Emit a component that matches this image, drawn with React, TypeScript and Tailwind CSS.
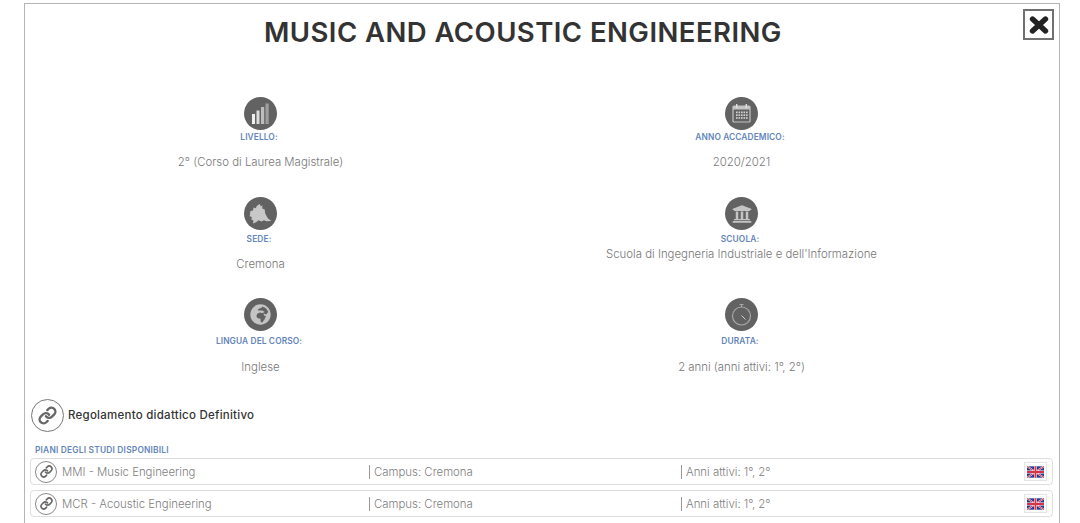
import React from "react";
import { Link as LinkIcon } from "lucide-react";
import { FaGlobeAfrica, FaUniversity } from "react-icons/fa";

const Circle = ({ children }: { children: React.ReactNode }) => (
  <div className="flex h-[33px] w-[33px] items-center justify-center rounded-full bg-[#626262] text-[#c4c4c4]">{children}</div>
);

const Bars = () => (
  <svg width="33" height="33" viewBox="0 0 33 33">
    <rect x="8" y="17" width="3" height="10" fill="#f0f0f0" />
    <rect x="12.5" y="13.5" width="3" height="13.5" fill="#dcdcdc" />
    <rect x="17" y="10" width="3.2" height="17" fill="#bdbdbd" />
    <rect x="21.5" y="6.5" width="3.2" height="20.5" fill="#9e9e9e" />
  </svg>
);

const Calendar = () => (
  <svg width="33" height="33" viewBox="0 0 33 33">
    <rect x="8" y="9" width="17" height="16" rx="1" fill="none" stroke="#c4c4c4" strokeWidth="1.2" />
    <rect x="8" y="9" width="17" height="3.5" fill="#c4c4c4" />
    <rect x="11" y="7" width="1.4" height="4" fill="#e0e0e0" />
    <rect x="20.6" y="7" width="1.4" height="4" fill="#e0e0e0" />
    {[14.5, 17.3, 20.1].map((y) =>
      [11, 13.5, 16, 18.5, 21].map((x) => <rect key={`${x}-${y}`} x={x} y={y} width="1.6" height="1.7" fill="#d2d2d2" />)
    )}
  </svg>
);

const Region = () => (
  <svg width="33" height="33" viewBox="0 0 33 33">
    <path
      d="M6.4 14 L9 13.4 L9.6 10.4 L11.6 11.2 L13 8.8 L15.7 7 L17 9.4 L18.4 8.2 L18.3 11.6 L20.7 12.6 L21.2 16.6 L22.8 19.4 L24 21.6 L27.4 24 L22.4 24.3 L20 23.2 L17.4 24.4 L14.6 23.2 L12.4 25 L9 26.6 L9.4 23.6 L7.4 22.6 L7.8 20 L5.7 19.3 Z"
      fill="#c8c8c8"
    />
  </svg>
);

const Stopwatch = () => (
  <svg width="33" height="33" viewBox="0 0 33 33" fill="none" stroke="#a8a8a8">
    <circle cx="16.5" cy="18" r="9" strokeWidth="1.2" />
    <path d="M14.5 6.5 H18.5 M16.5 6.5 V9" strokeWidth="1.2" />
    <path d="M16.5 17.5 L20.5 21.5" strokeWidth="1" stroke="#d0d0d0" />
  </svg>
);

const CloseX = () => (
  <svg width="20" height="18" viewBox="0 0 20 18">
    <path d="M3.5 3 L16.5 15 M16.5 3 L3.5 15" stroke="#222" strokeWidth="5.4" strokeLinecap="round" />
  </svg>
);

const Flag = () => (
  <svg width="17" height="12" viewBox="0 0 60 40">
    <rect width="60" height="40" fill="#2b3a8c" />
    <path d="M0 0 L60 40 M60 0 L0 40" stroke="#fff" strokeWidth="6" />
    <path d="M0 0 L60 40 M60 0 L0 40" stroke="#d8324a" strokeWidth="3.5" />
    <path d="M30 0 V40 M0 20 H60" stroke="#fff" strokeWidth="10" />
    <path d="M30 0 V40 M0 20 H60" stroke="#d8324a" strokeWidth="6.5" />
  </svg>
);

const LinkCircle = ({ size }: { size: "lg" | "sm" }) =>
  size === "lg" ? (
    <div className="flex h-[33px] w-[33px] shrink-0 items-center justify-center rounded-full border border-[#777] text-[#666]">
      <LinkIcon size={19} strokeWidth={3} />
    </div>
  ) : (
    <div className="flex h-[22px] w-[22px] shrink-0 items-center justify-center rounded-full border border-[#888] text-[#666]">
      <LinkIcon size={13} strokeWidth={3} />
    </div>
  );

const Info = ({
  icon,
  label,
  value,
  labelClass,
  valueClass,
}: {
  icon: React.ReactNode;
  label: string;
  value: string;
  labelClass: string;
  valueClass: string;
}) => (
  <div className="flex flex-col items-center">
    <Circle>{icon}</Circle>
    <div className={`pr-[3px] text-[8.4px] font-semibold leading-[12px] tracking-[0.1px] text-[#6385ba] ${labelClass}`}>{label}</div>
    <div className={`text-[11.4px] font-light leading-[14px] text-[#777] ${valueClass}`}>{value}</div>
  </div>
);

const Row = ({ name }: { name: string }) => (
  <div className="flex h-[27px] w-[1023px] items-center rounded-[4px] border border-[#dedede] pl-[4px] text-[11.4px] font-light text-[#808080]">
    <LinkCircle size="sm" />
    <div className="ml-[5px] w-[307px] leading-[14px]">{name}</div>
    <div className="w-[312px] border-l border-[#999] pl-[4px] leading-[14px]">Campus: Cremona</div>
    <div className="w-[343px] border-l border-[#999] pl-[4px] leading-[14px]">Anni attivi: 1°, 2°</div>
    <div className="flex h-[19px] w-[23px] shrink-0 items-center justify-center border border-[#e4e4e4]">
      <Flag />
    </div>
  </div>
);

export default function App() {
  return (
    <div className="h-[523px] overflow-hidden bg-white pl-[24px] pt-[3px] text-[#333] [font-family:Inter,'Liberation_Sans',sans-serif]">
      <div className="h-[540px] w-[1036px] border border-[#b5b5b5]">
        <div className="flex h-[93px] items-start">
          <h1 className="ml-[239px] mt-[11px] whitespace-nowrap text-[27.5px] font-semibold leading-[34px] tracking-[0.45px] text-[#333]">
            MUSIC AND ACOUSTIC ENGINEERING
          </h1>
          <div className="ml-auto mr-[5px] mt-[5px] flex h-[31px] w-[31px] items-center justify-center border-2 border-[#707070]">
            <CloseX />
          </div>
        </div>
        <div className="-ml-[5px] grid w-[962px] grid-cols-2">
          <div className="h-[100px]">
            <Info icon={<Bars />} label="LIVELLO:" value="2° (Corso di Laurea Magistrale)" labelClass="mt-[1px]" valueClass="mt-[12px]" />
          </div>
          <div className="h-[100px]">
            <Info icon={<Calendar />} label="ANNO ACCADEMICO:" value="2020/2021" labelClass="mt-[1px]" valueClass="mt-[12px]" />
          </div>
          <div className="h-[101px]">
            <Info icon={<Region />} label="SEDE:" value="Cremona" labelClass="mt-[3px]" valueClass="mt-[12px]" />
          </div>
          <div className="h-[101px]">
            <Info icon={<FaUniversity size={20} />} label="SCUOLA:" value="Scuola di Ingegneria Industriale e dell'Informazione" labelClass="mt-[3px]" valueClass="mt-[2px]" />
          </div>
          <div>
            <Info icon={<FaGlobeAfrica size={21} />} label="LINGUA DEL CORSO:" value="Inglese" labelClass="mt-[4px]" valueClass="mt-[13px]" />
          </div>
          <div>
            <Info icon={<Stopwatch />} label="DURATA:" value="2 anni (anni attivi: 1°, 2°)" labelClass="mt-[4px]" valueClass="mt-[13px]" />
          </div>
        </div>
        <div className="ml-[6px] mt-[25px] flex items-center">
          <LinkCircle size="lg" />
          <div className="ml-[4px] text-[11.5px] font-medium tracking-[0.25px] text-[#333]">Regolamento didattico Definitivo</div>
        </div>
        <div className="ml-[10px] mt-[13px] whitespace-nowrap text-[8.4px] font-semibold leading-[10px] tracking-[0.2px] text-[#6385ba]">PIANI DEGLI STUDI DISPONIBILI</div>
        <div className="ml-[5px] mt-[3px] flex flex-col gap-[5px]">
          <Row name="MMI - Music Engineering" />
          <Row name="MCR - Acoustic Engineering" />
        </div>
      </div>
    </div>
  );
}
